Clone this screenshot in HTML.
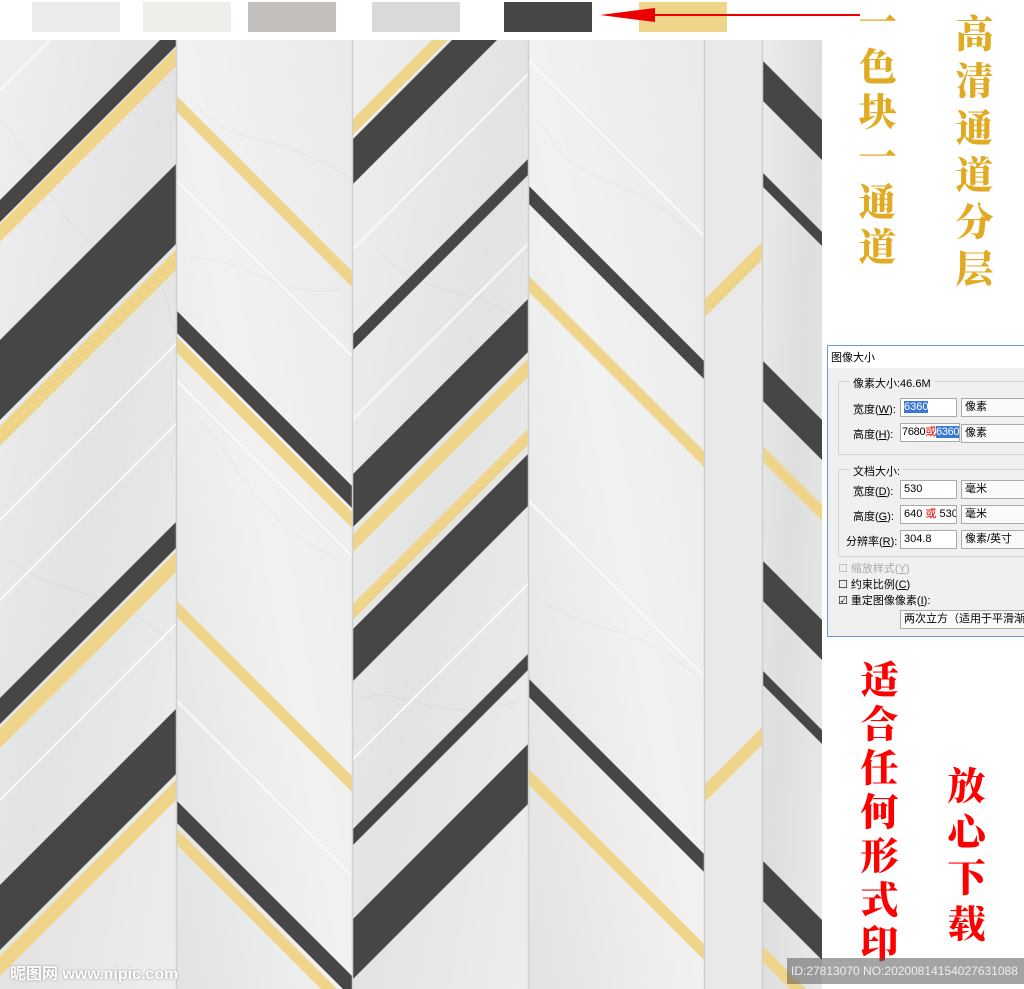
<!DOCTYPE html>
<html><head><meta charset="utf-8"><style>
html,body{margin:0;width:1024px;height:989px;overflow:hidden}
body{background:#fff;position:relative;font-family:"Liberation Sans","Noto Sans CJK SC",sans-serif}
.sw{position:absolute;top:2px;height:30px}
.v{position:absolute;font-family:"Noto Serif CJK SC","WenQuanYi Zen Hei",serif;font-weight:900;writing-mode:vertical-rl;line-height:1}
.dlg{position:absolute;left:827px;top:345px;width:200px;height:290px;background:#f0f0f0;border:1px solid #6d9bd1;font-size:11px;color:#000;overflow:hidden}
.dlg .t{position:absolute;white-space:nowrap}
.inp{position:absolute;background:#fff;border:1px solid #aaa;height:19px;font-size:11px;line-height:17px;padding-left:3px;box-sizing:border-box;white-space:nowrap;overflow:hidden}
.grp{position:absolute;border:1px solid #d5d5d5}
</style></head><body>
<div class="sw" style="left:32px;width:88px;background:#ececec"></div>
<div class="sw" style="left:143px;width:88px;background:#efeeea"></div>
<div class="sw" style="left:248px;width:88px;background:#c3bfbd"></div>
<div class="sw" style="left:372px;width:88px;background:#d9d9d9"></div>
<div class="sw" style="left:504px;width:88px;background:#464646"></div>
<div class="sw" style="left:639px;width:88px;background:#efd58a"></div>
<svg style="position:absolute;left:0;top:0" width="1024" height="989">
<line x1="860" y1="15" x2="620" y2="15" stroke="#e00" stroke-width="2"/>
<polygon points="600,15 655,8 655,22" fill="#e00"/>
<defs>
<linearGradient id="m1" x1="0" y1="0" x2="1" y2="1"><stop offset="0" stop-color="#ececec"/><stop offset=".5" stop-color="#dedede"/><stop offset="1" stop-color="#eaeaea"/></linearGradient>
<linearGradient id="m2" x1="1" y1="0" x2="0" y2="1"><stop offset="0" stop-color="#e6e6e6"/><stop offset=".5" stop-color="#efefef"/><stop offset="1" stop-color="#dddddd"/></linearGradient>
</defs>
<g fill="none" stroke="#c4c4c4" stroke-width="1.2" opacity=".8">
<path d="M0 120 C40 160 60 240 120 260 S160 300 176 330"/>
<path d="M200 110 C240 150 280 130 352 180"/>
<path d="M190 260 C230 250 280 300 340 290"/>
<path d="M360 700 C400 680 430 730 520 700"/>
<path d="M540 120 C580 200 620 160 700 240"/>
<path d="M540 600 C600 640 640 620 700 680"/>
<path d="M10 560 C60 600 100 580 170 640"/>
<path d="M200 420 C240 460 250 520 340 560"/>
<path d="M380 250 C420 300 460 280 520 320"/>
</g>
<svg x="0" y="40" width="176" height="949" viewBox="0 40 176 949"><rect x="0" y="40" width="176" height="949" fill="url(#m1)" opacity=".85"/>
<g fill="#464646"><polygon points="0,200 300,-100 300,-78 0,222"/><polygon points="0,340 300,40 300,120 0,420"/><polygon points="0,698 300,398 300,424 0,724"/><polygon points="0,885 300,585 300,650 0,950"/></g>
<g fill="#efd58a"><polygon points="0,224 300,-76 300,-58 0,242"/><polygon points="0,426 300,126 300,146 0,446"/><polygon points="0,728 300,428 300,448 0,748"/><polygon points="0,956 300,656 300,676 0,976"/></g>
<g stroke="#fafafa" stroke-width="2"><line x1="0" y1="90" x2="300" y2="-210"/><line x1="0" y1="520" x2="300" y2="220"/><line x1="0" y1="600" x2="300" y2="300"/><line x1="0" y1="800" x2="300" y2="500"/></g>
</svg>
<svg x="176" y="40" width="176" height="949" viewBox="176 40 176 949"><rect x="176" y="40" width="176" height="949" fill="url(#m2)" opacity=".85"/>
<g fill="#efd58a"><polygon points="176,95 476,395 476,411 176,111"/><polygon points="176,336 476,636 476,652 176,352"/><polygon points="176,600 476,900 476,916 176,616"/><polygon points="176,828 476,1128 476,1144 176,844"/></g>
<g fill="#464646"><polygon points="176,310 476,610 476,632 176,332"/><polygon points="176,800 476,1100 476,1122 176,822"/></g>
<g stroke="#fafafa" stroke-width="2"><line x1="176" y1="180" x2="476" y2="480"/><line x1="176" y1="380" x2="476" y2="680"/><line x1="176" y1="700" x2="476" y2="1000"/></g>
</svg>
<svg x="352" y="40" width="176" height="949" viewBox="352 40 176 949"><rect x="352" y="40" width="176" height="949" fill="url(#m1)" opacity=".85"/>
<g fill="#efd58a"><polygon points="352,120 652,-180 652,-164 352,136"/><polygon points="352,535 652,235 652,253 352,553"/><polygon points="352,605 652,305 652,321 352,621"/></g>
<g fill="#464646"><polygon points="352,140 652,-160 652,-115 352,185"/><polygon points="352,335 652,35 652,51 352,351"/><polygon points="352,475 652,175 652,228 352,528"/><polygon points="352,630 652,330 652,382 352,682"/><polygon points="352,830 652,530 652,546 352,846"/><polygon points="352,920 652,620 652,680 352,980"/></g>
<g stroke="#fafafa" stroke-width="2"><line x1="352" y1="250" x2="652" y2="-50"/><line x1="352" y1="420" x2="652" y2="120"/><line x1="352" y1="760" x2="652" y2="460"/></g>
</svg>
<svg x="528" y="40" width="176" height="949" viewBox="528 40 176 949"><rect x="528" y="40" width="176" height="949" fill="url(#m2)" opacity=".85"/>
<g fill="#464646"><polygon points="528,185 828,485 828,503 528,203"/><polygon points="528,678 828,978 828,996 528,696"/></g>
<g fill="#efd58a"><polygon points="528,275 828,575 828,591 528,291"/><polygon points="528,768 828,1068 828,1084 528,784"/></g>
<g stroke="#fafafa" stroke-width="2"><line x1="528" y1="60" x2="828" y2="360"/><line x1="528" y1="500" x2="828" y2="800"/></g>
</svg>
<svg x="704" y="40" width="58" height="949" viewBox="704 40 58 949"><rect x="704" y="40" width="58" height="949" fill="#e9e9e9"/>
<g fill="#efd58a"><polygon points="704,300 904,100 904,118 704,318"/><polygon points="704,785 904,585 904,603 704,803"/></g>
</svg>
<svg x="762" y="40" width="60" height="949" viewBox="762 40 60 949"><rect x="762" y="40" width="60" height="949" fill="url(#m1)"/>
<g fill="#464646"><polygon points="762,60 962,260 962,300 762,100"/><polygon points="762,172 962,372 962,386 762,186"/><polygon points="762,360 962,560 962,600 762,400"/><polygon points="762,560 962,760 962,800 762,600"/><polygon points="762,670 962,870 962,884 762,684"/><polygon points="762,860 962,1060 962,1100 762,900"/></g>
<g fill="#efd58a"><polygon points="762,445 962,645 962,661 762,461"/><polygon points="762,945 962,1145 962,1161 762,961"/></g>
</svg>
<g stroke="#d0d0d0" stroke-width="1.5"><line x1="176.5" y1="40" x2="176.5" y2="989"/><line x1="352.5" y1="40" x2="352.5" y2="989"/><line x1="528.5" y1="40" x2="528.5" y2="989"/><line x1="704.5" y1="40" x2="704.5" y2="989"/><line x1="762.5" y1="40" x2="762.5" y2="989"/></g>
</svg>
<div class="v" style="left:858px;top:2px;font-size:38px;color:#e0aa22;letter-spacing:7px">一色块一通道</div>
<div class="v" style="left:955px;top:14px;font-size:38px;color:#e0aa22;letter-spacing:9px">高清通道分层</div>
<div class="v" style="left:860px;top:660px;font-size:38px;color:#f00;letter-spacing:6px">适合任何形式印</div>
<div class="v" style="left:947px;top:766px;font-size:38px;color:#f00;letter-spacing:8px">放心下载</div>
<div class="dlg">
<div style="position:absolute;left:0;top:0;width:200px;height:22px;background:#fff"></div>
<div class="t" style="left:3px;top:3px">图像大小</div>
<div class="grp" style="left:10px;top:35px;width:200px;height:72px"></div>
<div class="t" style="left:22px;top:29px;background:#f0f0f0;padding:0 3px">像素大小:46.6M</div>
<div class="t" style="left:25px;top:55px">宽度(<u>W</u>):</div>
<div class="inp" style="left:72px;top:52px;width:57px"><span style="background:#3a78d6;color:#fff">6360</span></div>
<div class="inp" style="left:133px;top:52px;width:70px;background:#fafafa">像素</div>
<div class="t" style="left:25px;top:80px">高度(<u>H</u>):</div>
<div class="inp" style="left:72px;top:77px;width:60px;padding-left:1px;letter-spacing:-.3px">7680<span style="color:#e00">或</span><span style="background:#3a78d6;color:#fff">6360</span></div>
<div class="inp" style="left:133px;top:78px;width:70px;background:#fafafa">像素</div>
<div class="grp" style="left:10px;top:123px;width:200px;height:86px"></div>
<div class="t" style="left:22px;top:117px;background:#f0f0f0;padding:0 3px">文档大小:</div>
<div class="t" style="left:25px;top:137px">宽度(<u>D</u>):</div>
<div class="inp" style="left:72px;top:134px;width:57px">530</div>
<div class="inp" style="left:133px;top:134px;width:70px;background:#fafafa">毫米</div>
<div class="t" style="left:25px;top:162px">高度(<u>G</u>):</div>
<div class="inp" style="left:72px;top:159px;width:57px">640 <span style="color:#e00">或</span> 530</div>
<div class="inp" style="left:133px;top:159px;width:70px;background:#fafafa">毫米</div>
<div class="t" style="left:18px;top:187px">分辨率(<u>R</u>):</div>
<div class="inp" style="left:72px;top:184px;width:57px">304.8</div>
<div class="inp" style="left:133px;top:184px;width:70px;background:#fafafa">像素/英寸</div>
<div class="t" style="left:10px;top:214px;color:#aaa">☐ 缩放样式(<u>Y</u>)</div>
<div class="t" style="left:10px;top:230px">☐ 约束比例(<u>C</u>)</div>
<div class="t" style="left:10px;top:246px">☑ 重定图像像素(<u>I</u>):</div>
<div class="inp" style="left:72px;top:264px;width:130px;height:19px;background:#fafafa">两次立方（适用于平滑渐变</div>
</div>
<div style="position:absolute;left:10px;top:960px;color:#fff;font-size:16px;font-weight:bold;text-shadow:0 0 2px #888">昵图网 www.nipic.com</div>
<div style="position:absolute;left:787px;top:958px;width:237px;height:26px;background:rgba(90,90,90,.55);color:#eee;font-size:12px;line-height:26px;padding-left:4px;box-sizing:border-box;white-space:nowrap">ID:27813070 NO:20200814154027631088</div>
</body></html>
